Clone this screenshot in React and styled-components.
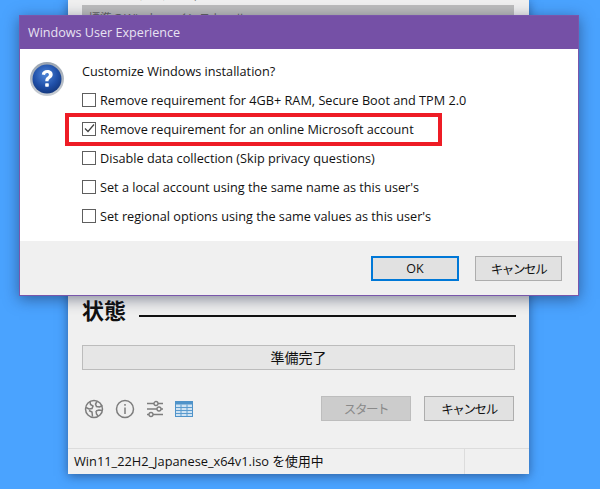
import React from "react";
import styled, { createGlobalStyle } from "styled-components";

const uiFont = `"Open Sans", "Noto Sans CJK JP", sans-serif`;

const options = [
  { label: "Remove requirement for 4GB+ RAM, Secure Boot and TPM 2.0" },
  { label: "Remove requirement for an online Microsoft account", checked: true, marked: true },
  { label: "Disable data collection (Skip privacy questions)" },
  { label: "Set a local account using the same name as this user's" },
  { label: "Set regional options using the same values as this user's" },
];

const QuestionIcon = () => (
  <svg width="36" height="36" viewBox="0 0 36 36">
    <defs>
      <radialGradient id="ball" cx="45%" cy="35%" r="70%">
        <stop offset="0%" stopColor="#4f86d8" />
        <stop offset="60%" stopColor="#1f4fa8" />
        <stop offset="100%" stopColor="#123477" />
      </radialGradient>
      <linearGradient id="rim" x1="0" y1="0" x2="0" y2="1">
        <stop offset="0%" stopColor="#9aa4b0" />
        <stop offset="100%" stopColor="#c9ced4" />
      </linearGradient>
    </defs>
    <circle cx="18" cy="18" r="17" fill="url(#rim)" />
    <circle cx="18" cy="18" r="14.5" fill="url(#ball)" />
    <path
      d="M12.8 13.6c.3-3 2.500-4.600 5.500-4.600 3.100 0 5.400 1.700 5.400 4.400 0 2-1.100 3-2.500 4-1.200.9-1.700 1.500-1.700 2.900h-3.200c-.1-2.300.7-3.400 2.100-4.500 1-.8 1.500-1.300 1.500-2.200 0-1-.7-1.700-1.800-1.700-1.200 0-1.900.8-2.100 2z"
      fill="#fff"
    />
    <rect x="16.200" y="22.300" width="3.600" height="3.400" rx="0.6" fill="#fff" />
  </svg>
);

const GlobeIcon = () => (
  <svg width="20" height="20" viewBox="0 0 20 20" fill="none" stroke="#7d7d7d" strokeWidth="1.5">
    <circle cx="10" cy="10" r="8.500" />
    <path d="M6 2.500l.5 3 2.500 1.500-1 2.500-3 .5-3-1.500M5 11.500l3 1.500.5 4.500M13 2.500l-1.500 2.500 1 2.500 3 .5 3-1.500M12 12l3-1 3 .5M12 12l.5 3 1.500 2" />
  </svg>
);

const InfoIcon = () => (
  <svg width="20" height="20" viewBox="0 0 20 20" fill="none" stroke="#7d7d7d" strokeWidth="1.500">
    <circle cx="10" cy="10" r="8.500" />
    <path d="M10 8.500v6.500" />
    <path d="M10 5v1.800" />
  </svg>
);

const SlidersIcon = () => (
  <svg width="18" height="18" viewBox="0 0 18 18" fill="none" stroke="#7d7d7d" strokeWidth="1.300">
    <path d="M1 3.500h16M1 9h16M1 14.500h16" />
    <circle cx="10" cy="3.500" r="2" fill="#f0f0f0" />
    <circle cx="13" cy="9" r="2" fill="#f0f0f0" />
    <circle cx="5" cy="14.500" r="2" fill="#f0f0f0" />
  </svg>
);

const TableIcon = () => (
  <svg width="18" height="16" viewBox="0 0 18 16">
    <rect x="0" y="0" width="18" height="16" fill="#4f93c9" />
    <rect x="1" y="3.500" width="16" height="11.500" fill="#cfe3f3" />
    <path d="M1 6.500h16M1 9.500h16M1 12.500h16M6 3.500v11.500M12 3.500v11.500" stroke="#5b9bce" strokeWidth="1" />
  </svg>
);

const App = () => (
  <>
    <GlobalStyle />
    <Page>
      <BackWindow>
        <BackContent>
          <SectionTop>
            <ClippedLabel>イメージのオプション</ClippedLabel>
            <ClippedSelect>標準のWindowsインストール</ClippedSelect>
          </SectionTop>
          <StatusHeading>
            <StatusTitle>状態</StatusTitle>
            <StatusRule />
          </StatusHeading>
          <ProgressBar>準備完了</ProgressBar>
          <ActionRow>
            <IconRow>
              <GlobeIcon />
              <InfoIcon />
              <SlidersIcon />
              <TableIcon />
            </IconRow>
            <ActionButtons>
              <WindowButton disabled>スタート</WindowButton>
              <WindowButton>キャンセル</WindowButton>
            </ActionButtons>
          </ActionRow>
        </BackContent>
        <StatusBar>
          <StatusText>Win11_22H2_Japanese_x64v1.iso を使用中</StatusText>
          <StatusCell />
        </StatusBar>
      </BackWindow>

      <Dialog>
        <TitleBar>Windows User Experience</TitleBar>
        <DialogBody>
          <IconSlot>
            <QuestionIcon />
          </IconSlot>
          <Questions>
            <Prompt>Customize Windows installation?</Prompt>
            {options.map((opt) => (
              <OptionRow key={opt.label}>
                <CheckBox>
                  {opt.checked && (
                    <svg width="11" height="11" viewBox="0 0 11 11" fill="none" stroke="#404040" strokeWidth="1.200">
                      <path d="M1 5.500l3 3 6-7" />
                    </svg>
                  )}
                </CheckBox>
                <OptionLabel>{opt.label}</OptionLabel>
                {opt.marked && <RedMark />}
              </OptionRow>
            ))}
          </Questions>
        </DialogBody>
        <DialogFooter>
          <DialogButton $primary>OK</DialogButton>
          <DialogButton>キャンセル</DialogButton>
        </DialogFooter>
      </Dialog>
    </Page>
  </>
);

const GlobalStyle = createGlobalStyle`
  html, body {
    margin: 0;
    padding: 0;
    background: #4aa3ff;
  }
`;

const Page = styled.div`
  position: relative;
  width: 600px;
  height: 489px;
  overflow: hidden;
  background: #4aa3ff;
  font-family: ${uiFont};
  color: #111;
`;

const BackWindow = styled.div`
  display: flex;
  flex-direction: column;
  width: 461px;
  height: 474px;
  margin-left: 68px;
  background: #f0f0f0;
  box-shadow: 0 2px 10px rgba(20, 40, 80, 0.55);
`;

const BackContent = styled.div`
  flex: 1;
  display: flex;
  flex-direction: column;
  padding: 0 14px;
`;

const SectionTop = styled.div`
  height: 294px;
  overflow: hidden;
`;

const ClippedLabel = styled.div`
  height: 5px;
  margin-top: -13px;
  font-size: 13px;
  line-height: 15px;
`;

const ClippedSelect = styled.div`
  height: 30px;
  margin-top: 13px;
  margin-right: 1px;
  padding-left: 6px;
  background: #bdbdbd;
  color: #666;
  font-size: 12px;
  line-height: 27px;
`;

const StatusHeading = styled.div`
  display: flex;
  align-items: center;
  gap: 13px;
  height: 36px;
`;

const StatusTitle = styled.div`
  margin-bottom: 4px;
  font-size: 22px;
  font-weight: 700;
  line-height: 32px;
`;

const StatusRule = styled.div`
  flex: 1;
  height: 2px;
  margin-right: -1px;
  margin-top: 8px;
  background: #111;
`;

const ProgressBar = styled.div`
  height: 25px;
  box-sizing: border-box;
  margin-top: 15px;
  border: 1px solid #bcbcbc;
  background: #e6e6e6;
  text-align: center;
  font-size: 14px;
  line-height: 23px;
`;

const ActionRow = styled.div`
  display: flex;
  justify-content: space-between;
  align-items: center;
  margin-top: 26px;
  padding-right: 1px;
`;

const IconRow = styled.div`
  display: flex;
  align-items: center;
  gap: 11px;
  margin-left: 2px;
`;

const ActionButtons = styled.div`
  display: flex;
  gap: 13px;
`;

const WindowButton = styled.button`
  width: 90px;
  height: 25px;
  box-sizing: border-box;
  padding: 0;
  border: 1px solid ${(p) => (p.disabled ? "#bdbdbd" : "#adadad")};
  background: ${(p) => (p.disabled ? "#cccccc" : "#e1e1e1")};
  color: ${(p) => (p.disabled ? "#8a8a8a" : "#111")};
  font-family: ${uiFont};
  font-size: 12.500px;
  letter-spacing: -1.400px;
`;

const StatusBar = styled.div`
  display: flex;
  height: 26px;
  box-sizing: border-box;
  border-top: 1px solid #dcdcdc;
`;

const StatusText = styled.div`
  flex: 1;
  padding-left: 6px;
  font-size: 12.800px;
  line-height: 25px;
`;

const StatusCell = styled.div`
  width: 64px;
  border-left: 1px solid #dcdcdc;
`;

const Dialog = styled.div`
  position: absolute;
  left: 19px;
  top: 15px;
  display: flex;
  flex-direction: column;
  width: 560px;
  height: 281px;
  box-sizing: border-box;
  border: 1px solid #7a56ab;
  background: #f0f0f0;
  box-shadow: 0 3px 14px rgba(20, 30, 60, 0.5);
`;

const TitleBar = styled.div`
  height: 33px;
  padding-left: 8px;
  background: #7550a6;
  color: #e8e2f2;
  font-size: 12.600px;
  line-height: 33px;
`;

const DialogBody = styled.div`
  display: flex;
  height: 192px;
  background: #fff;
`;

const IconSlot = styled.div`
  width: 62px;
  padding: 12px 0 0 9px;
  box-sizing: border-box;
`;

const Questions = styled.div`
  display: flex;
  flex-direction: column;
  padding-top: 12px;
`;

const Prompt = styled.div`
  height: 22px;
  margin-bottom: 2px;
  font-size: 12.700px;
  line-height: 20px;
`;

const OptionRow = styled.div`
  position: relative;
  display: flex;
  align-items: center;
  gap: 4px;
  height: 29px;
`;

const CheckBox = styled.span`
  display: flex;
  align-items: center;
  justify-content: center;
  width: 14px;
  height: 14px;
  box-sizing: border-box;
  border: 1px solid #5e5e5e;
  background: #fff;
`;

const OptionLabel = styled.span`
  font-size: 12.700px;
  white-space: nowrap;
`;

const RedMark = styled.div`
  position: absolute;
  left: -17px;
  top: -1px;
  width: 377px;
  height: 33px;
  box-sizing: border-box;
  border: 4px solid #ee1c25;
`;

const DialogFooter = styled.div`
  flex: 1;
  display: flex;
  justify-content: flex-end;
  align-items: flex-start;
  gap: 16px;
  padding: 15px 16px 0 0;
`;

const DialogButton = styled.button`
  width: ${(p) => (p.$primary ? "88px" : "87px")};
  height: 25px;
  box-sizing: border-box;
  padding: 0;
  border: ${(p) => (p.$primary ? "2px solid #0078d7" : "1px solid #adadad")};
  background: #e1e1e1;
  color: #111;
  font-family: ${uiFont};
  font-size: 12.500px;
  letter-spacing: ${(p) => (p.$primary ? "0" : "-1.400px")};
`;

export default App;
